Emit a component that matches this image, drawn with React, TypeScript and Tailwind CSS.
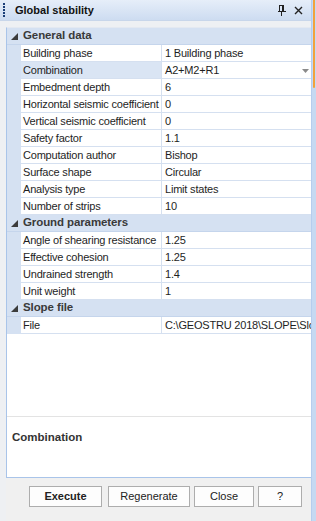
import React from "react";

const font = { fontFamily: '"Liberation Sans", Arial, sans-serif' };

function Tri() {
  return (
    <svg width="7" height="7" viewBox="0 0 7 7" className="block">
      <polygon points="7,0 7,7 0,7" fill="#3c3c3c" />
    </svg>
  );
}

function Category({ title }: { title: string }) {
  return (
    <div className="flex h-[17px] items-center bg-[#d5e1f2] border-b border-[#c5d5ec]">
      <div className="w-[11px] shrink-0 flex justify-end">
        <Tri />
      </div>
      <span className="pl-[5px] text-[11.5px] font-bold text-[#3a3a3a] leading-none tracking-[-0.1px]">{title}</span>
    </div>
  );
}

function Row({ label, value, selected, dropdown }: { label: string; value: string; selected?: boolean; dropdown?: boolean }) {
  return (
    <div className="flex h-[17px] min-w-0">
      <div className="w-[14px] bg-[#d5e1f2] shrink-0" />
      <div
        className={
          "w-[141px] shrink-0 border-b border-r border-[#d5e0f0] pl-[2px] flex items-center text-[11px] leading-none whitespace-nowrap overflow-hidden text-[#1e1e1e] tracking-[-0.2px] " +
          (selected ? "bg-[#dae5f4]" : "bg-white")
        }
      >
        {label}
      </div>
      <div className="flex-1 min-w-0 border-b border-[#d5e0f0] bg-white pl-[3px] flex items-center text-[11px] leading-none whitespace-nowrap overflow-hidden text-[#1e1e1e] tracking-[-0.2px] relative">
        {value}
        {dropdown && (
          <svg width="7" height="4" viewBox="0 0 7 4" className="absolute right-[2px] top-[7px]">
            <polygon points="0,0 7,0 3.5,4" fill="#8a8a8a" />
          </svg>
        )}
      </div>
    </div>
  );
}

export default function App() {
  return (
    <div className="w-[316px] h-[521px] flex bg-[#eef0f3] overflow-hidden" style={font}>
      <div className="w-[311px] shrink-0 flex flex-col min-w-0">
        {/* Title bar */}
        <div className="h-[21px] shrink-0 flex items-center bg-gradient-to-b from-[#e6eef9] to-[#cddcf1] border-b border-[#c8d6ea]">
          <div className="ml-[3px] w-[2px] h-[14px] flex flex-col justify-between">
            {Array.from({ length: 5 }).map((_, i) => (
              <div key={i} className="w-[2px] h-[2px] bg-[#1b3f78]" />
            ))}
          </div>
          <span className="ml-[10px] text-[11px] font-bold text-[#111]">Global stability</span>
          <div className="ml-auto flex items-center gap-[8px] mr-[8px]">
            <svg width="8" height="11" viewBox="0 0 8 11">
              <rect x="1" y="0" width="1" height="6" fill="#222" />
              <rect x="1" y="0" width="5" height="1" fill="#222" />
              <rect x="4" y="0" width="2" height="6" fill="#222" />
              <rect x="0" y="6" width="8" height="1" fill="#222" />
              <rect x="3" y="7" width="1" height="4" fill="#222" />
            </svg>
            <svg width="9" height="9" viewBox="0 0 9 9">
              <path d="M1 1 L8 8 M8 1 L1 8" stroke="#222" strokeWidth="1.4" />
            </svg>
          </div>
        </div>
        <div className="h-[6px] shrink-0 bg-[#eef0f3]" />
        <div className="flex-1 flex min-w-0">
          <div className="w-[6px] shrink-0" />
          <div className="w-[305px] shrink-0 flex flex-col min-w-0">
            <div className="h-[451px] shrink-0 flex flex-col border-l border-t border-b border-t-[#e4e9f1] border-l-[#a9c4e9] border-b-[#a9c4e9] bg-white min-w-0">
              <Category title="General data" />
              <Row label="Building phase" value="1 Building phase" />
              <Row label="Combination" value="A2+M2+R1" selected dropdown />
              <Row label="Embedment depth" value="6" />
              <Row label="Horizontal seismic coefficient" value="0" />
              <Row label="Vertical seismic coefficient" value="0" />
              <Row label="Safety factor" value="1.1" />
              <Row label="Computation author" value="Bishop" />
              <Row label="Surface shape" value="Circular" />
              <Row label="Analysis type" value="Limit states" />
              <Row label="Number of strips" value="10" />
              <Category title="Ground parameters" />
              <Row label="Angle of shearing resistance" value="1.25" />
              <Row label="Effective cohesion" value="1.25" />
              <Row label="Undrained strength" value="1.4" />
              <Row label="Unit weight" value="1" />
              <Category title="Slope file" />
              <Row label="File" value="C:\GEOSTRU 2018\SLOPE\Slope" />
              <div className="h-[82px] shrink-0" />
              <div className="h-[1px] shrink-0 bg-[#e3e3e3]" />
              <div className="flex-1 pl-[5px] pt-[7px]">
                <span className="text-[11.5px] font-bold text-[#333]">Combination</span>
              </div>
            </div>
            <div className="flex-1 flex items-start pt-[8px] gap-[4px] pl-[23px] bg-[#f0f0f0]">
              <button className="w-[73px] h-[21px] border border-[#adadad] bg-[#fdfdfd] text-[11px] font-bold text-[#222]">Execute</button>
              <button className="ml-[2px] w-[82px] h-[21px] border border-[#adadad] bg-[#fdfdfd] text-[11px] text-[#222]">Regenerate</button>
              <button className="w-[60px] h-[21px] border border-[#adadad] bg-[#fdfdfd] text-[11px] text-[#222]">Close</button>
              <button className="w-[44px] h-[21px] border border-[#adadad] bg-[#fdfdfd] text-[11px] text-[#222]">?</button>
            </div>
          </div>
        </div>
      </div>
      <div className="w-[5px] shrink-0 flex bg-[#c6d9f2] border-l border-[#b6cdee]">
        <div className="ml-[1px] w-[2px] h-[88px] bg-[#f2a23c] rounded-b-[1px]" />
      </div>
    </div>
  );
}
